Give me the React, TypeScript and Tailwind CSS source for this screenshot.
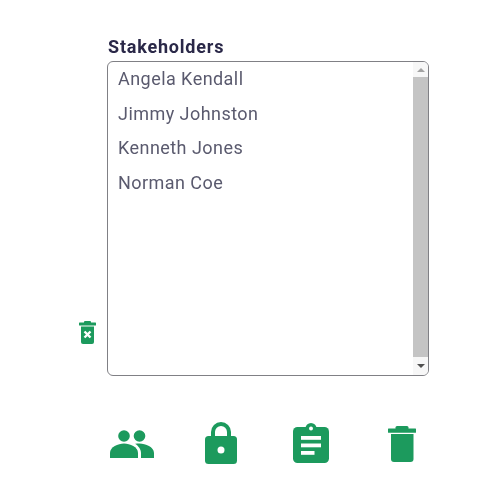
import React from "react";

const names = ["Angela Kendall", "Jimmy Johnston", "Kenneth Jones", "Norman Coe"];

const Scrollbar: React.FC = () => (
  <div className="w-[15px] shrink-0 flex flex-col items-center bg-[#f7f7f7] py-[1px]">
    <div className="h-[14px] flex items-center justify-center">
      <div className="w-0 h-0 border-x-[4px] border-x-transparent border-b-[4px] border-b-[#a3a3a3]" />
    </div>
    <div className="flex-1 w-full bg-[#c4c4c4]" />
    <div className="h-[17px] flex items-center justify-center">
      <div className="w-0 h-0 border-x-[4px] border-x-transparent border-t-[4px] border-t-[#505050]" />
    </div>
  </div>
);

const GREEN = "#1c9a5d";

const SmallTrash = () => (
  <svg width="17" height="24" viewBox="0 0 17 24" fill={GREEN}>
    <rect x="5" y="0" width="7" height="3" rx="1" />
    <rect x="0" y="1.500" width="17" height="3" rx="0.500" />
    <path d="M2 5.500h13v15.500a2 2 0 0 1-2 2H4a2 2 0 0 1-2-2z" />
    <path d="M5.500 10.500l6 6M11.500 10.500l-6 6" stroke="#fff" strokeWidth="2.400" fill="none" />
  </svg>
);

const People = () => (
  <svg width="44" height="37" viewBox="0 0 44 37" fill={GREEN}>
    <circle cx="14" cy="14" r="5.800" />
    <circle cx="29.500" cy="14" r="5.800" />
    <path d="M0 31v5h28v-5c0-6-8-9.500-14-9.500S0 25 0 31z" />
    <path d="M25 21.800c1-.2 2.900-.3 4.500-.3 6 0 14.500 3.500 14.500 9.500v5H31v-5c0-3.800-2.500-7-6-9.200z" />
  </svg>
);

const Lock = () => (
  <svg width="32" height="42" viewBox="0 0 32 42" fill={GREEN}>
    <path d="M8 15V10a8 8 0 0 1 16 0V15" fill="none" stroke={GREEN} strokeWidth="4" />
    <rect x="0" y="14" width="32" height="28" rx="3.500" />
    <circle cx="16" cy="28" r="3.500" fill="#fff" />
  </svg>
);

const Clipboard = () => (
  <svg width="36" height="40" viewBox="0 0 36 40" fill={GREEN}>
    <rect x="0" y="4" width="36" height="36" rx="4.500" />
    <circle cx="18" cy="5.500" r="5.500" />
    <circle cx="18" cy="5.500" r="2" fill="#fff" />
    <rect x="8" y="13" width="20" height="3.800" fill="#fff" />
    <rect x="8" y="20.500" width="20" height="3.800" fill="#fff" />
    <rect x="8" y="28" width="13.500" height="3.800" fill="#fff" />
  </svg>
);

const Trash = () => (
  <svg width="28" height="37" viewBox="0 0 28 37" fill={GREEN}>
    <rect x="7.500" y="0" width="13" height="4" rx="1.500" />
    <rect x="0" y="2.500" width="28" height="4.300" rx="0.500" />
    <path d="M3 8h22.500v25a3 3 0 0 1-3 3H6a3 3 0 0 1-3-3z" />
  </svg>
);

export default function App() {
  return (
    <div className="w-[500px] h-[500px] bg-white pt-[37px] font-['Roboto',sans-serif] blur-[0.4px]">
      <div className="pl-[108px] text-[18px] leading-[20px] font-bold tracking-[0.8px] text-[#2a2848]">
        Stakeholders
      </div>
      <div className="flex items-end mt-[4px] pl-[79px]">
        <div className="mb-[31px] mr-[11px] flex">
          <SmallTrash />
        </div>
        <div className="w-[322px] h-[315px] flex rounded-[6px] border border-[#808085] overflow-hidden bg-white">
          <ul className="flex-1 pl-[10px] text-[18px] text-[#5a5a6e]">
            {names.map((n) => (
              <li key={n} className="h-[34.600px] leading-[34px] tracking-[0.45px]">
                {n}
              </li>
            ))}
          </ul>
          <Scrollbar />
        </div>
      </div>
      <div className="flex items-start pl-[110px] mt-[46px]">
        <People />
        <div className="ml-[51px]">
          <Lock />
        </div>
        <div className="ml-[56px] mt-[1px]">
          <Clipboard />
        </div>
        <div className="ml-[59px] mt-[4px]">
          <Trash />
        </div>
      </div>
    </div>
  );
}
